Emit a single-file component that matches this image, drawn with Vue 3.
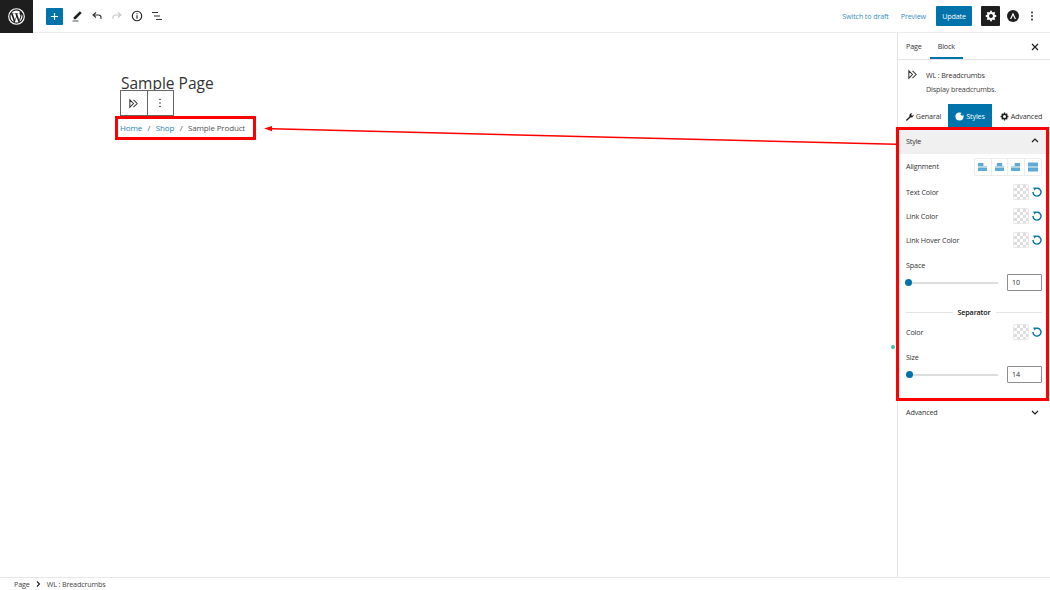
<script setup>
const colors = [{ label: 'Text Color' }, { label: 'Link Color' }, { label: 'Link Hover Color' }]
</script>

<template>
  <div class="app">
    <header class="topbar">
      <div class="logo">
        <svg width="17" height="17" viewBox="0 0 24 24"><circle cx="12" cy="12" r="11" fill="none" stroke="#fff" stroke-width="1.6"/><path fill="#fff" d="M3.6 12c0 3.3 1.9 6.200 4.700 7.500L4.300 8.600C3.800 9.600 3.600 10.800 3.600 12zm14-0.400c0-1-.4-1.700-.7-2.300-.4-.7-.8-1.200-.8-1.900 0-.7.600-1.400 1.300-1.400h.1C16 4.600 14.100 3.600 12 3.600c-2.900 0-5.500 1.500-7 3.800h.5c.9 0 2.200-.1 2.200-.1.400 0 .5.600 0 .7 0 0-.4 0-.9.100l3 8.900 1.800-5.400-1.300-3.500c-.4 0-.8-.1-.8-.1-.4 0-.4-.7 0-.7 0 0 1.400.1 2.200.1.900 0 2.200-.1 2.200-.1.400 0 .5.600 0 .7 0 0-.5 0-1 .1l3 8.800.8-2.800c.4-1.100.6-1.900.6-2.600zm-5.500 1.200l-2.500 7.300c.8.200 1.600.4 2.400.4 1 0 1.900-.2 2.800-.5l-.1-.1-2.600-7.100zm7.200-4.800c0 .3.100.6.100.9 0 .9-.2 1.900-.6 3.100l-2.600 7.400c2.500-1.500 4.200-4.200 4.200-7.400 0-1.500-.4-2.800-1.100-4z"/></svg>
      </div>
      <div class="tools">
        <button class="add">
          <svg width="9" height="9" viewBox="0 0 10 10"><path d="M5 1v8M1 5h8" stroke="#fff" stroke-width="1.300"/></svg>
        </button>
        <svg class="tool" width="12" height="12" viewBox="0 0 12 12"><path d="M2.800 7.300 8.800 1.200l1.900 1.900-6 6.100H2.800z" fill="#1e1e1e"/><path d="M1.500 11h6" stroke="#555"/></svg>
        <svg class="tool" width="12" height="12" viewBox="0 0 12 12"><path d="M5 2.500 2 5l3 2.500M2 5h5.500c1.600 0 2.500 1 2.500 2.300V9" fill="none" stroke="#333" stroke-width="1.100"/></svg>
        <svg class="tool" width="12" height="12" viewBox="0 0 12 12"><path d="M7 2.500 10 5 7 7.500M10 5H4.500C2.900 5 2 6 2 7.300V9" fill="none" stroke="#c8c8c8" stroke-width="1.100"/></svg>
        <svg class="tool" width="12" height="12" viewBox="0 0 12 12"><circle cx="6" cy="6" r="4.700" fill="none" stroke="#1e1e1e" stroke-width="1.100"/><path d="M6 5.200v3.600M6 3.200v1.100" stroke="#1e1e1e" stroke-width="1.100"/></svg>
        <svg class="tool" width="12" height="12" viewBox="0 0 12 12"><path d="M1 2.500h6M3 6h6M5 9.500h6" stroke="#333" stroke-width="1.100"/></svg>
      </div>
      <div class="actions">
        <a class="link draft">Switch to draft</a>
        <a class="link preview">Preview</a>
        <button class="update">Update</button>
        <button class="gear">
          <svg width="12" height="12" viewBox="0 0 12 12"><circle cx="6" cy="6" r="3" fill="none" stroke="#fff" stroke-width="2"/><path d="M6 .8v2M6 9.200v2M.8 6h2M9.200 6h2M2.300 2.300l1.400 1.400M8.300 8.300l1.400 1.400M2.300 9.700l1.400-1.400M8.300 3.700l1.400-1.400" stroke="#fff" stroke-width="1.800"/></svg>
        </button>
        <svg class="astra" width="12" height="12" viewBox="0 0 12 12"><circle cx="6" cy="6" r="6" fill="#1e1e1e"/><path d="M6 2.600 3 9h1.300L6 5.300 7.700 9H9z" fill="#fff"/></svg>
        <svg class="dots" width="4" height="12" viewBox="0 0 4 12"><circle cx="2" cy="2.500" r=".9" fill="#1e1e1e"/><circle cx="2" cy="6" r=".9" fill="#1e1e1e"/><circle cx="2" cy="9.500" r=".9" fill="#1e1e1e"/></svg>
      </div>
    </header>

    <div class="body">
      <main class="editor">
        <h1 class="title">Sample Page</h1>
        <div class="toolbar">
          <div class="tb-cell">
            <svg width="11" height="11" viewBox="0 0 12 12"><path d="M2 2v8l4-4zM6 2l4 4-4 4" fill="none" stroke="#333" stroke-width="1.100"/></svg>
          </div>
          <div class="tb-cell">
            <svg width="4" height="12" viewBox="0 0 4 12"><circle cx="2" cy="2.500" r=".8" fill="#333"/><circle cx="2" cy="6" r=".8" fill="#333"/><circle cx="2" cy="9.500" r=".8" fill="#333"/></svg>
          </div>
        </div>
        <nav class="crumbs">
          <a>Home</a><span class="sep">/</span><a>Shop</a><span class="sep">/</span><span class="current">Sample Product</span>
        </nav>
      </main>

      <aside class="sidebar">
        <div class="side-tabs">
          <span class="side-tab">Page</span>
          <span class="side-tab active">Block</span>
          <svg class="close" width="8" height="8" viewBox="0 0 8 8"><path d="M1 1l6 6M7 1 1 7" stroke="#1e1e1e" stroke-width="1.200"/></svg>
        </div>
        <div class="card">
          <svg width="11" height="11" viewBox="0 0 12 12"><path d="M2 2v8l4-4zM6 2l4 4-4 4" fill="none" stroke="#333" stroke-width="1.100"/></svg>
          <div class="card-text">
            <div class="card-title">WL : Breadcrumbs</div>
            <div class="card-desc">Display breadcrumbs.</div>
          </div>
        </div>
        <div class="panel-tabs">
          <div class="ptab general">
            <svg width="9" height="9" viewBox="0 0 10 10"><path d="M1 9l4-4c-.6-1.600.6-3.800 3.200-3.600L6.800 3l.4 1 1 .3 1.500-1.400C9.800 5.400 7.500 6.500 6 6L2 10z" fill="#1e1e1e"/></svg>
            Genaral
          </div>
          <div class="ptab active">
            <svg width="9" height="9" viewBox="0 0 10 10"><circle cx="5" cy="5" r="4.500" fill="#fff"/><circle cx="7.800" cy="2.600" r="1.500" fill="#0073aa"/></svg>
            Styles
          </div>
          <div class="ptab advanced">
            <svg width="9" height="9" viewBox="0 0 12 12"><circle cx="6" cy="6" r="3" fill="none" stroke="#1e1e1e" stroke-width="2"/><path d="M6 .8v2M6 9.200v2M.8 6h2M9.200 6h2M2.300 2.300l1.400 1.400M8.300 8.300l1.400 1.400M2.300 9.700l1.400-1.400M8.300 3.700l1.400-1.400" stroke="#1e1e1e" stroke-width="1.800"/></svg>
            Advanced
          </div>
        </div>

        <div class="panel-head">
          <span>Style</span>
          <svg width="8" height="5" viewBox="0 0 8 5"><path d="M1 4l3-3 3 3" fill="none" stroke="#1e1e1e" stroke-width="1.200"/></svg>
        </div>
        <div class="panel">
          <div class="row align-row">
            <span class="align-label">Alignment</span>
            <div class="aligns">
              <div class="al"><svg width="9" height="10" viewBox="0 0 10 10"><path d="M0 .5h6v3.500H0zM0 6h10v3.500H0z" fill="#5fa9d6"/><path d="M0 5h10" stroke="#2a85b5" stroke-width=".8"/></svg></div>
              <div class="al"><svg width="9" height="10" viewBox="0 0 10 10"><path d="M2 .5h6v3.500H2zM0 6h10v3.500H0z" fill="#5fa9d6"/><path d="M0 5h10" stroke="#2a85b5" stroke-width=".8"/></svg></div>
              <div class="al"><svg width="9" height="10" viewBox="0 0 10 10"><path d="M4 .5h6v3.500H4zM0 6h10v3.500H0z" fill="#5fa9d6"/><path d="M0 5h10" stroke="#2a85b5" stroke-width=".8"/></svg></div>
              <div class="al last"><svg width="10" height="10" viewBox="0 0 10 10"><path d="M0 .5h10V4H0zM0 6h10v3.500H0z" fill="#5fa9d6"/><path d="M0 5h10" stroke="#2a85b5" stroke-width=".8"/></svg></div>
            </div>
          </div>

          <div v-for="c in colors" :key="c.label" class="row color-row">
            <span>{{ c.label }}</span>
            <div class="swatch-wrap">
              <div class="swatch"></div>
              <svg class="reset" width="10" height="10" viewBox="0 0 10 10"><path d="M2.600 1.900A4 4 0 1 1 1 5" fill="none" stroke="#0073aa" stroke-width="1.400"/><path d="M1 .6 4.200 .8 2.600 3.400z" fill="#0073aa"/></svg>
            </div>
          </div>

          <div class="label space-label">Space</div>
          <div class="slider-row">
            <div class="slider"><div class="rail"></div><div class="knob"></div></div>
            <div class="num">10</div>
          </div>

          <div class="sep-head"><i></i><b>Separator</b><i></i></div>

          <div class="row color-row sep-color">
            <span>Color</span>
            <div class="swatch-wrap">
              <div class="swatch"></div>
              <svg class="reset" width="10" height="10" viewBox="0 0 10 10"><path d="M2.600 1.900A4 4 0 1 1 1 5" fill="none" stroke="#0073aa" stroke-width="1.400"/><path d="M1 .6 4.200 .8 2.600 3.400z" fill="#0073aa"/></svg>
            </div>
          </div>

          <div class="label size-label">Size</div>
          <div class="slider-row">
            <div class="slider"><div class="rail"></div><div class="knob k2"></div></div>
            <div class="num">14</div>
          </div>
        </div>
        <div class="adv">
          <span>Advanced</span>
          <svg width="8" height="5" viewBox="0 0 8 5"><path d="M1 1l3 3 3-3" fill="none" stroke="#1e1e1e" stroke-width="1.200"/></svg>
        </div>
      </aside>
    </div>

    <footer class="footer">
      <span>Page</span>
      <svg width="5" height="6" viewBox="0 0 5 6"><path d="M1 .5 3.500 3 1 5.500" fill="none" stroke="#1e1e1e" stroke-width="1.100"/></svg>
      <span>WL : Breadcrumbs</span>
    </footer>

    <div class="box box-a"></div>
    <div class="box box-b"></div>
    <svg class="arrow" width="640" height="30" viewBox="0 0 640 30">
      <path d="M8 4.800 632 20.300" stroke="#f00" stroke-width="1.500"/>
      <path d="M0 4.600 8 2v5.200z" fill="#f00"/>
    </svg>
    <div class="dot"></div>
  </div>
</template>

<style>
html, body { margin: 0; background: #fff; }
</style>

<style scoped>
.app {
  position: relative;
  width: 1050px;
  height: 590px;
  display: flex;
  flex-direction: column;
  overflow: hidden;
  font-family: "Open Sans", "Noto Sans", sans-serif;
  font-size: 7.200px;
  letter-spacing: -.15px;
  color: #333;
  background: #fff;
}
.topbar { height: 33px; display: flex; align-items: center; border-bottom: 1px solid #ececec; box-sizing: border-box; flex: none; }
.logo { width: 33px; height: 33px; background: #1e1e1e; display: flex; align-items: center; justify-content: center; flex: none; }
.tools { display: flex; align-items: center; margin-left: 13px; }
.add { width: 17px; height: 17px; background: #0073aa; border: 0; padding: 0; border-radius: 1px; display: flex; align-items: center; justify-content: center; margin-right: 8px; }
.tool { margin-right: 8px; }
.actions { margin-left: auto; display: flex; align-items: center; padding-right: 16px; }
.link { color: #3d8fbb; }
.draft { margin-right: 12px; }
.preview { margin-right: 10px; }
.update { width: 36px; height: 20px; background: #0073aa; color: #fff; border: 0; padding: 0; font: inherit; letter-spacing: inherit; border-radius: 1px; margin-right: 9px; }
.gear { width: 19px; height: 20px; background: #1e1e1e; border: 0; padding: 0; border-radius: 1px; display: flex; align-items: center; justify-content: center; margin-right: 7px; }
.astra { margin-right: 11px; }
.body { flex: 1; display: flex; min-height: 0; }
.editor { flex: 1; padding-left: 121px; padding-top: 40px; min-width: 0; }
.title { margin: 0; font-size: 15.500px; font-weight: 400; line-height: 20px; letter-spacing: 0; color: #333; }
.toolbar { display: flex; width: 54px; height: 26px; border: 1px solid #666; box-sizing: border-box; margin: -3px 0 0 -1px; background: #fff; position: relative; }
.tb-cell { flex: 1; display: flex; align-items: center; justify-content: center; }
.tb-cell + .tb-cell { border-left: 1px solid #666; }
.crumbs { margin: 5px 0 0 -1px; font-size: 8px; line-height: 14px; color: #555; }
.crumbs a { color: #2a85b5; }
.sep { margin: 0 5.500px; }
.sidebar { width: 153px; flex: none; border-left: 1px solid #e4e4e4; box-sizing: border-box; }
.side-tabs { height: 27px; display: flex; align-items: flex-end; border-bottom: 1px solid #e4e4e4; position: relative; padding-left: 8px; box-sizing: border-box; }
.side-tab { height: 27px; line-height: 28px; margin-right: 15px; }
.side-tab.active { box-shadow: inset 0 -2px 0 #0073aa; padding: 0 8px; margin-left: -7px; margin-right: 0; }
.close { position: absolute; right: 11px; top: 10px; }
.card { display: flex; padding: 9px 0 0 9px; height: 44px; box-sizing: border-box; }
.card-text { margin-left: 8px; }
.card-title { line-height: 14px; margin-top: -1px; }
.card-desc { line-height: 14px; color: #444; }
.panel-tabs { display: flex; height: 23px; }
.ptab { display: flex; align-items: center; justify-content: center; gap: 2px; padding-top: 1px; box-sizing: border-box; }
.general { width: 50px; }
.ptab.active { background: #0073aa; color: #fff; width: 44px; }
.advanced { flex: 1; }
.panel-head { height: 27px; background: #f0f0f0; display: flex; align-items: center; justify-content: space-between; padding: 0 11px 0 8px; }
.panel { padding: 0 8px; height: 250px; box-sizing: border-box; }
.row { display: flex; align-items: center; justify-content: space-between; }
.align-row { height: 25px; margin-bottom: 1px; }
.align-label { margin-top: -2px; }
.aligns { display: flex; border: 1px solid #ececec; border-radius: 2px; height: 18px; box-sizing: border-box; }
.al { width: 16.500px; box-sizing: border-box; display: flex; align-items: center; justify-content: center; border-right: 1px solid #ececec; }
.al.last { border-right: 0; }
.color-row { height: 24px; }
.swatch-wrap { display: flex; align-items: center; gap: 3px; }
.swatch {
  width: 16px; height: 16px; border: 1px solid #e8e8e8; box-sizing: border-box; border-radius: 2px;
  background-color: #fff;
  background-image: linear-gradient(45deg, #ddd 25%, transparent 25%, transparent 75%, #ddd 75%), linear-gradient(45deg, #ddd 25%, transparent 25%, transparent 75%, #ddd 75%);
  background-size: 6px 6px;
  background-position: 0 0, 3px 3px;
}
.label { line-height: 12px; }
.space-label { margin-top: 7px; }
.slider-row { display: flex; align-items: center; margin-top: 3px; }
.slider { position: relative; width: 92px; height: 16px; margin-right: 9px; }
.rail { position: absolute; left: 0; right: 0; top: 7px; height: 2px; background: #ddd; }
.knob { position: absolute; left: -1.500px; top: 4.500px; width: 7px; height: 7px; border-radius: 50%; background: #0073aa; }
.k2 { left: -.5px; }
.num { width: 35px; height: 17px; border: 1px solid #8d8d8d; box-sizing: border-box; border-radius: 1px; line-height: 15px; padding-left: 4px; }
.sep-head { display: flex; align-items: center; margin-top: 15px; height: 12px; }
.sep-head i { flex: 1; height: 1px; background: #e4e4e4; }
.sep-head b { margin: 0 5px; font-weight: 600; color: #111; }
.sep-color { margin-top: 2px; }
.size-label { margin-top: 7px; }
.adv { height: 24px; display: flex; align-items: center; justify-content: space-between; padding: 0 11px 0 8px; margin-top: -4px; }
.footer { height: 13px; flex: none; border-top: 1px solid #e8e8e8; box-sizing: border-box; display: flex; align-items: center; gap: 6px; padding-left: 14px; color: #444; }
.box { position: absolute; border: 3px solid #f00; box-sizing: border-box; pointer-events: none; }
.box-a { left: 115px; top: 116px; width: 141px; height: 24px; }
.box-b { left: 896px; top: 127px; width: 153px; height: 274px; }
.arrow { position: absolute; left: 264px; top: 124px; }
.dot { position: absolute; left: 891px; top: 345px; width: 4px; height: 4px; border-radius: 50%; background: #2fc7a5; }
</style>
